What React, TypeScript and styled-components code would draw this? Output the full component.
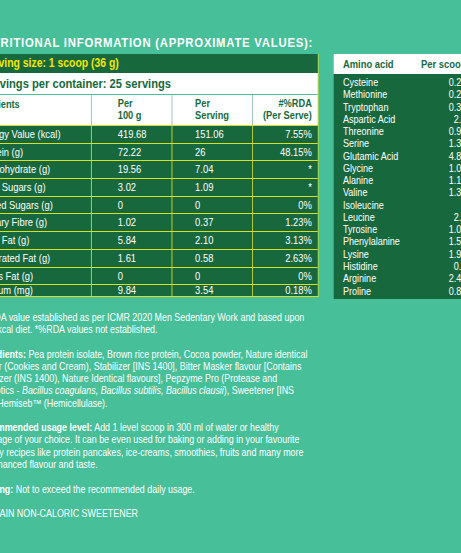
import React from 'react';
import styled, {createGlobalStyle} from "styled-components";

const colors = {
    teal: '#47bf99',
    green: '#17693d',
    yellow: '#f4e700',
    line: '#d6df2a',
    headLine: '#93b9a4',
    white: '#ffffff',
}

// the label uses a condensed face; Liberation Sans is squeezed to match it
const CONDENSE = 0.84

const GlobalStyle = createGlobalStyle`
    html, body {
        margin: 0;
        padding: 0;
        background: ${colors.teal};
    }

    body {
        font-family: "Liberation Sans", Arial, sans-serif;
        overflow: hidden;
    }
`

type NutrientRow = {
    name: string
    per100: string
    perServing: string
    rda: string
}

const nutrients: Array<NutrientRow> = [
    {name: "Energy Value (kcal)", per100: "419.68", perServing: "151.06", rda: "7.55%"},
    {name: "Protein (g)", per100: "72.22", perServing: "26", rda: "48.15%"},
    {name: "Carbohydrate (g)", per100: "19.56", perServing: "7.04", rda: "*"},
    {name: "Total Sugars (g)", per100: "3.02", perServing: "1.09", rda: "*"},
    {name: "Added Sugars (g)", per100: "0", perServing: "0", rda: "0%"},
    {name: "Dietary Fibre (g)", per100: "1.02", perServing: "0.37", rda: "1.23%"},
    {name: "Total Fat (g)", per100: "5.84", perServing: "2.10", rda: "3.13%"},
    {name: "Saturated Fat (g)", per100: "1.61", perServing: "0.58", rda: "2.63%"},
    {name: "Trans Fat (g)", per100: "0", perServing: "0", rda: "0%"},
    {name: "Sodium (mg)", per100: "9.84", perServing: "3.54", rda: "0.18%"},
]

const aminoAcids: Array<[string, string]> = [
    ["Cysteine", "0.25"],
    ["Methionine", "0.27"],
    ["Tryptophan", "0.33"],
    ["Aspartic Acid", "2.9"],
    ["Threonine", "0.95"],
    ["Serine", "1.35"],
    ["Glutamic Acid", "4.82"],
    ["Glycine", "1.05"],
    ["Alanine", "1.13"],
    ["Valine", "1.36"],
    ["Isoleucine", ""],
    ["Leucine", "2.2"],
    ["Tyrosine", "1.04"],
    ["Phenylalanine", "1.53"],
    ["Lysine", "1.94"],
    ["Histidine", "0.6"],
    ["Arginine", "2.48"],
    ["Proline", "0.84"],
]

export default function App() {
    return (
        <Page>
            <GlobalStyle/>
            <Sheet>
                <Title>NUTRITIONAL INFORMATION (APPROXIMATE VALUES):</Title>
                <Tables>
                    <NutritionTable>
                        <ServingBar>Serving size: 1 scoop (36 g)</ServingBar>
                        <ContainerBar>Servings per container: 25 servings</ContainerBar>
                        <HeadRow>
                            <HeadCell>Nutrients</HeadCell>
                            <HeadCell>Per<br/>100 g</HeadCell>
                            <HeadCell>Per<br/>Serving</HeadCell>
                            <HeadCell>#%RDA<br/>(Per Serve)</HeadCell>
                        </HeadRow>
                        {nutrients.map((row, i) => (
                            <BodyRow key={row.name} $last={i === nutrients.length - 1}>
                                <Cell>{row.name}</Cell>
                                <Cell>{row.per100}</Cell>
                                <Cell>{row.perServing}</Cell>
                                <Cell>{row.rda}</Cell>
                            </BodyRow>
                        ))}
                    </NutritionTable>

                    <AminoTable>
                        <AminoHead>
                            <span>Amino acid</span>
                            <span>Per scoop</span>
                        </AminoHead>
                        <AminoBody>
                            {aminoAcids.map(([name, value]) => (
                                <AminoRow key={name}>
                                    <span>{name}</span>
                                    <span>{value}</span>
                                </AminoRow>
                            ))}
                        </AminoBody>
                    </AminoTable>
                </Tables>

                <Notes>
                    <Note>
                        #%RDA value established as per ICMR 2020 Men Sedentary Work and based upon<br/>
                        2000 kcal diet. *%RDA values not established.
                    </Note>
                    <Note>
                        <b>Ingredients:</b> Pea protein isolate, Brown rice protein, Cocoa powder, Nature identical<br/>
                        flavour (Cookies and Cream), Stabilizer [INS 1400], Bitter Masker flavour [Contains<br/>
                        Stabilizer (INS 1400), Nature Identical flavours], Pepzyme Pro (Protease and<br/>
                        Probiotics - <i>Bacillus coagulans, Bacillus subtilis, Bacillus clausii</i>), Sweetener [INS<br/>
                        955], Hemiseb™ (Hemicellulase).
                    </Note>
                    <Note>
                        <b>Recommended usage level:</b> Add 1 level scoop in 300 ml of water or healthy<br/>
                        beverage of your choice. It can be even used for baking or adding in your favourite<br/>
                        healthy recipes like protein pancakes, ice-creams, smoothies, fruits and many more<br/>
                        for enhanced flavour and taste.
                    </Note>
                    <Note>
                        <b>Warning:</b> Not to exceed the recommended daily usage.
                    </Note>
                    <Note>CONTAIN NON-CALORIC SWEETENER</Note>
                </Notes>
            </Sheet>
        </Page>
    );
}

const Page = styled.div`
    width: 461px;
    height: 553px;
    overflow: hidden;
    background: ${colors.teal};
`

// the photo crops the label's left side off
const Sheet = styled.div`
    width: 620px;
    margin-left: -25px;
    padding-top: 34px;
    display: flex;
    flex-direction: column;
    transform: scaleX(${CONDENSE});
    transform-origin: 0 0;
`

const Title = styled.h2`
    margin: 0 0 3px;
    font-size: 13.5px;
    line-height: 17px;
    letter-spacing: 0.9px;
    font-weight: 700;
    color: ${colors.white};
    white-space: nowrap;
`

const Tables = styled.div`
    display: flex;
    align-items: flex-start;
    column-gap: 18px;
`

const NutritionTable = styled.div`
    display: flex;
    flex-direction: column;
    border-right: 1px solid ${colors.line};
    border-bottom: 1px solid ${colors.line};
`

const ServingBar = styled.div`
    height: 19px;
    padding-left: 8px;
    background: ${colors.green};
    color: ${colors.yellow};
    font-size: 12.4px;
    font-weight: 700;
    line-height: 19px;
    white-space: nowrap;
`

const ContainerBar = styled.div`
    height: 21px;
    padding-left: 8px;
    background: ${colors.white};
    color: ${colors.green};
    font-size: 13.3px;
    font-weight: 700;
    line-height: 21px;
    border-bottom: 1px solid ${colors.teal};
    white-space: nowrap;
`

const columns = `
    display: grid;
    grid-template-columns: 138px 96px 96px 78px;
`

const HeadRow = styled.div`
    ${columns};
    height: 30px;
    background: ${colors.white};
`

const HeadCell = styled.div`
    display: flex;
    flex-direction: column;
    justify-content: center;
    border-left: 1px solid ${colors.headLine};
    color: ${colors.green};
    font-size: 11px;
    font-weight: 700;
    line-height: 11.7px;
    white-space: nowrap;

    &:nth-child(1) {
        border-left: none;
        justify-content: flex-start;
        padding: 4px 0 0 5px;
    }

    &:nth-child(2) {
        padding-left: 31px;
    }

    &:nth-child(3) {
        padding-left: 27px;
    }

    &:nth-child(4) {
        padding-right: 7px;
        text-align: right;
    }
`

const BodyRow = styled.div<{ $last?: boolean }>`
    ${columns};
    height: ${props => props.$last ? '11.3px' : '16.7px'};
    background: ${colors.green};
    border-top: 1px solid ${colors.line};
    overflow: hidden;
`

const Cell = styled.div`
    border-left: 1px solid ${colors.line};
    color: ${colors.white};
    font-size: 11.2px;
    line-height: 16.7px;
    white-space: nowrap;

    &:nth-child(1) {
        border-left: none;
        padding-left: 5px;
    }

    &:nth-child(2) {
        padding-left: 31px;
    }

    &:nth-child(3) {
        padding-left: 27px;
    }

    &:nth-child(4) {
        padding-right: 7px;
        text-align: right;
    }

    ${BodyRow}:last-child > & {
        line-height: 11.3px;
    }
`

const AminoTable = styled.div`
    width: 175px;
    display: flex;
    flex-direction: column;
`

const AminoHead = styled.div`
    height: 20px;
    padding: 0 17px 0 11px;
    display: flex;
    align-items: center;
    justify-content: space-between;
    background: ${colors.white};
    color: ${colors.green};
    font-size: 11.2px;
    font-weight: 700;
`

const AminoBody = styled.div`
    padding: 2px 17px 2px 11px;
    background: ${colors.green};
`

const AminoRow = styled.div`
    display: flex;
    justify-content: space-between;
    color: ${colors.white};
    font-size: 10.8px;
    line-height: 12.27px;
`

const Notes = styled.div`
    margin-top: 12px;
    display: flex;
    flex-direction: column;
    row-gap: 12.5px;
`

const Note = styled.p`
    margin: 0;
    color: ${colors.white};
    font-size: 10.6px;
    line-height: 12.2px;
    white-space: nowrap;

    b {
        font-weight: 700;
    }
`
